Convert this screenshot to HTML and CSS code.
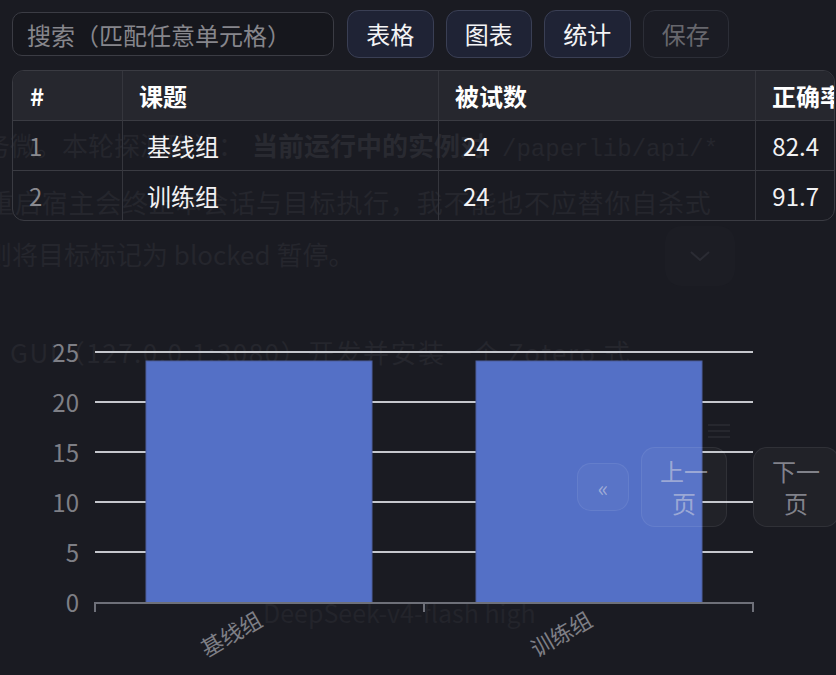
FILE: index.html
```html
<!DOCTYPE html>
<html lang="zh-CN">
<head>
<meta charset="utf-8">
<title>数据表</title>
<link rel="stylesheet" href="styles.css">
</head>
<body>
<div class="ghost" aria-hidden="true">
  <div class="ghost-para">
    <div class="gl">务微。本轮探测确认：<b>当前运行中的实例对</b><code>/paperlib/api/*</code></div>
    <div class="gl">重启宿主会终止本会话与目标执行，我不能也不应替你自杀式</div>
    <div class="gl">则将目标标记为 blocked 暂停。</div>
  </div>
  <div class="ghost-chev"><svg width="24" height="14" viewBox="0 0 24 14"><path d="M3 3 L12 11 L21 3" fill="none" stroke="#2b2c34" stroke-width="2"/></svg></div>
  <div class="ghost-line ghost-gui">GUI（127.0.0.1:3080）开发并安装一个 Zotero 式</div>
  <div class="ghost-menu"><span></span><span></span><span></span></div>
  <div class="ghost-line ghost-model">DeepSeek-v4-flash high</div>
</div>

<main class="app">
  <div class="toolbar">
    <input class="search" type="text" placeholder="搜索（匹配任意单元格）">
    <button class="btn">表格</button>
    <button class="btn">图表</button>
    <button class="btn">统计</button>
    <button class="btn btn-disabled" disabled>保存</button>
  </div>

  <div class="table-wrap">
    <table class="grid">
      <colgroup>
        <col class="c-idx"><col class="c-topic"><col class="c-n"><col class="c-acc">
      </colgroup>
      <thead>
        <tr><th>#</th><th>课题</th><th>被试数</th><th>正确率</th></tr>
      </thead>
      <tbody>
        <tr><td class="idx">1</td><td>基线组</td><td>24</td><td class="num">82.4</td></tr>
        <tr><td class="idx">2</td><td>训练组</td><td>24</td><td class="num">91.7</td></tr>
      </tbody>
    </table>
  </div>

  <div class="chart">
    <svg class="chart-svg" width="836" height="454" viewBox="0 221 836 454">
      <g class="split" stroke="#c5c7cd" stroke-width="2">
        <line x1="95" y1="352" x2="753" y2="352"/>
        <line x1="95" y1="402" x2="753" y2="402"/>
        <line x1="95" y1="452" x2="753" y2="452"/>
        <line x1="95" y1="502" x2="753" y2="502"/>
        <line x1="95" y1="552" x2="753" y2="552"/>
      </g>
      <g class="ylab" fill="#7e7f86" font-size="24" text-anchor="end" dominant-baseline="central">
        <text x="79" y="351">25</text>
        <text x="79" y="401">20</text>
        <text x="79" y="451">15</text>
        <text x="79" y="501">10</text>
        <text x="79" y="551">5</text>
        <text x="79" y="601">0</text>
      </g>
      <rect x="146" y="361" width="226" height="242" fill="#5470c6" stroke="#4c5f9e" stroke-width="1"/>
      <rect x="476" y="361" width="226" height="242" fill="#5470c6" stroke="#4c5f9e" stroke-width="1"/>
      <g stroke="#6e7079" stroke-width="2">
        <line x1="94" y1="603" x2="754" y2="603"/>
        <line x1="95" y1="603" x2="95" y2="612"/>
        <line x1="424" y1="603" x2="424" y2="612"/>
        <line x1="753" y1="603" x2="753" y2="612"/>
      </g>
      <g class="xlab" fill="#7e7f86" font-size="22" text-anchor="end" dominant-baseline="central">
        <text transform="translate(259 616) rotate(-30)">基线组</text>
        <text transform="translate(589 616) rotate(-30)">训练组</text>
      </g>
    </svg>
    <div class="pager">
      <button class="pbtn pbtn-first">«</button>
      <button class="pbtn pbtn-prev">上一页</button>
      <button class="pbtn pbtn-next">下一页</button>
    </div>
  </div>
</main>
</body>
</html>
```

FILE: styles.css
```css
html, body {
  margin: 0;
  padding: 0;
}

body {
  width: 836px;
  height: 675px;
  overflow: hidden;
  position: relative;
  background: #1a1b22;
  color: #f0f0f2;
  font-family: "Noto Sans CJK SC", "Noto Sans", sans-serif;
}

/* faint background layer (content from the page underneath) */
.ghost {
  position: absolute;
  inset: 0;
  z-index: 0;
  color: #25262d;
  font-size: 26px;
  pointer-events: none;
}

.ghost-para {
  position: absolute;
  left: -16px;
  top: 119px;
  line-height: 52px;
  white-space: nowrap;
}

.ghost-para .gl:nth-child(2) {
  margin-left: 4px;
  letter-spacing: 0.8px;
}

.ghost-para .gl:nth-child(3) {
  margin-left: 2px;
}

.ghost-para b {
  color: #292a31;
  font-weight: 700;
  margin-left: 8px;
}

.ghost-para code {
  font-family: "Liberation Mono", "DejaVu Sans Mono", monospace;
  font-size: 24px;
  margin-left: 16px;
}

.ghost-chev {
  position: absolute;
  left: 665px;
  top: 226px;
  width: 70px;
  height: 60px;
  border-radius: 16px;
  background: #1c1d24;
  display: flex;
  align-items: center;
  justify-content: center;
}

.ghost-line {
  position: absolute;
  white-space: nowrap;
}

.ghost-gui {
  left: 10px;
  top: 335px;
  line-height: 34px;
  letter-spacing: 1.5px;
}

.ghost-model {
  left: 263px;
  top: 596px;
  font-size: 25px;
  line-height: 32px;
  color: #23242b;
}

.ghost-menu {
  position: absolute;
  left: 708px;
  top: 424px;
  width: 22px;
  display: flex;
  flex-direction: column;
  gap: 4px;
}

.ghost-menu span {
  height: 2px;
  background: #26272e;
}

/* app */
.app {
  position: relative;
  z-index: 1;
  padding: 10px 0 0 12px;
}

.toolbar {
  display: flex;
  align-items: center;
  gap: 12px;
  height: 48px;
}

.search {
  width: 322px;
  height: 44px;
  box-sizing: border-box;
  margin: 0 1px 0 0;
  padding: 0 14px;
  border: 1px solid #3b3c44;
  border-radius: 10px;
  background: #16171d;
  color: #e6e6e8;
  font-family: "Noto Sans CJK SC", "Noto Sans", sans-serif;
  font-size: 24px;
  outline: none;
}

.search::placeholder {
  color: #86868c;
}

.btn {
  width: 86.5px;
  height: 48px;
  box-sizing: border-box;
  margin: 0;
  padding: 0;
  border: 1px solid #3a3f54;
  border-radius: 12px;
  background: #1f2335;
  color: #f4f4f6;
  font-family: "Noto Sans CJK SC", "Noto Sans", sans-serif;
  font-size: 24px;
  line-height: 1;
  text-align: center;
}

.btn-disabled {
  background: #1b1c24;
  border-color: #2c2e37;
  color: #67676d;
}

/* table */
.table-wrap {
  margin-top: 12px;
  width: 823px;
  box-sizing: border-box;
  border: 1px solid #3a3b42;
  border-radius: 12px;
  overflow: hidden;
}

.grid {
  width: 100%;
  table-layout: fixed;
  border-collapse: separate;
  border-spacing: 0;
  font-size: 24px;
}

.c-idx { width: 109px; }
.c-topic { width: 316px; }
.c-n { width: 317px; }
.c-acc { width: 79px; }

.grid th {
  height: 49px;
  padding: 0 0 0 16px;
  text-align: left;
  font-weight: 700;
  color: #ffffff;
  background: #26272e;
  white-space: nowrap;
  overflow: visible;
  box-sizing: border-box;
}

.grid th:first-child {
  padding-left: 17px;
}

.grid th + th,
.grid td + td {
  border-left: 1px solid #35363d;
}

.grid td {
  height: 50px;
  box-sizing: border-box;
  padding: 0 0 0 24px;
  border-top: 1px solid #3a3b42;
  color: #f2f2f4;
  white-space: nowrap;
}

.grid td.idx {
  padding-left: 16px;
  color: #8a8a90;
}

.grid td.num {
  padding: 0 15px 0 0;
  text-align: right;
}

/* chart */
.chart {
  position: relative;
  margin-left: -12px;
  width: 836px;
  height: 454px;
}

.chart-svg {
  display: block;
  font-family: "Noto Sans CJK SC", "Noto Sans", sans-serif;
}

.pager {
  position: absolute;
  left: 577px;
  top: 226px;
  display: flex;
  align-items: center;
}

.pbtn {
  box-sizing: border-box;
  width: 86px;
  margin: 0;
  padding: 7px 18px;
  border: 1px solid rgba(255, 255, 255, 0.07);
  border-radius: 14px;
  background: rgba(255, 255, 255, 0.03);
  color: rgba(215, 215, 226, 0.55);
  font-family: "Noto Sans CJK SC", "Noto Sans", sans-serif;
  font-size: 24px;
  line-height: 32px;
  text-align: center;
}

.pbtn-first {
  width: 52px;
  padding: 7px 0;
  font-size: 22px;
}

.pbtn-prev {
  margin-left: 12px;
}

.pbtn-next {
  margin-left: 26px;
  flex-shrink: 0;
}
```
